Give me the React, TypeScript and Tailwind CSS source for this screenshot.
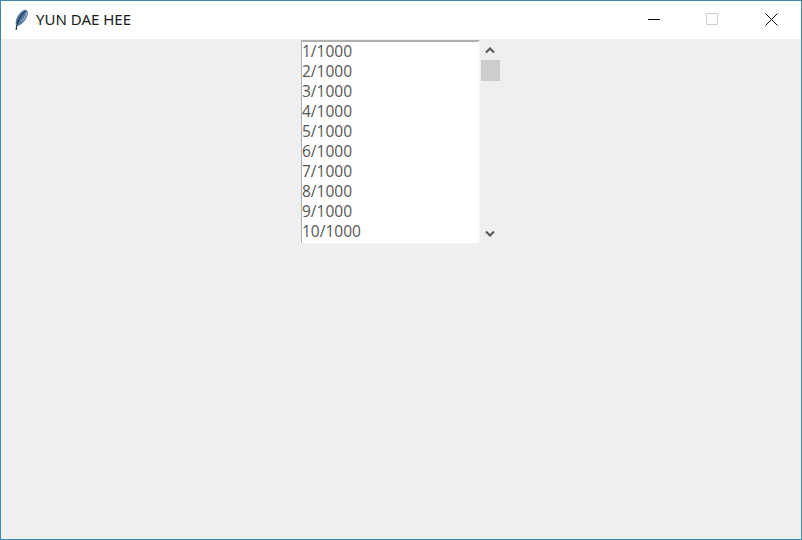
import React from 'react';

const rows = ['1/1000', '2/1000', '3/1000', '4/1000', '5/1000', '6/1000', '7/1000', '8/1000', '9/1000', '10/1000'];

const Feather = () => (
  <svg width="16" height="22" viewBox="0 0 16 22">
    <path d="M3 16.500 C1.500 11 5 4 11.500 0.800 C14 0.500 15.500 2.500 14.800 5.500 C13.500 10.500 9.500 15.500 4.500 17 Z" fill="#56789f" />
    <path d="M4.300 15.500 C5 11 8 6 12 2.500" stroke="#22395c" strokeWidth="1.300" fill="none" />
    <path d="M8.500 12.500 C11 10.500 13 7 13.800 3.500" stroke="#a3bdd8" strokeWidth="1.100" fill="none" />
    <path d="M3.800 16 L3.200 21" stroke="#3a3f46" strokeWidth="1.400" fill="none" />
  </svg>
);

const App: React.FC = () => {
  return (
    <div className="w-[802px] h-[540px] flex flex-col bg-[#efefef] border border-[#3a8db0] overflow-hidden font-['Open_Sans','Noto_Sans',sans-serif]">
      {/* title bar */}
      <div className="h-[38px] shrink-0 bg-white flex items-center">
        <div className="w-[35px] pl-[12px] flex items-center justify-start">
          <Feather />
        </div>
        <span className="text-[15px] leading-none -mt-[2px] text-[#1a1a1a] font-['Noto_Sans',sans-serif]">YUN DAE HEE</span>
        <div className="ml-auto flex items-center h-full -mt-[2px]">
          <div className="w-[58px] flex justify-center">
            <svg width="12" height="12" viewBox="0 0 12 12"><path d="M0 6.500H12" stroke="#111" strokeWidth="1" /></svg>
          </div>
          <div className="w-[58px] mr-[1px] flex justify-center">
            <svg width="12" height="12" viewBox="0 0 12 12"><rect x="0.500" y="0.500" width="11" height="11" fill="none" stroke="#cfcfcf" /></svg>
          </div>
          <div className="w-[59px] flex justify-center">
            <svg width="13" height="13" viewBox="0 0 13 13"><path d="M0.500 0.500L12.500 12.500M12.500 0.500L0.500 12.500" stroke="#111" strokeWidth="1" /></svg>
          </div>
        </div>
      </div>

      {/* listbox + scrollbar */}
      <div className="flex pl-[300px] pt-[1px]">
        <div className="w-[179px] h-[203px] bg-white border-l border-t-2 border-[#b0b0b0] border-r-2 border-r-[#f7f7f7] border-b-0 overflow-hidden">
          <div className="-mt-[1px]">
            {rows.map((r) => (
              <div key={r} className="h-[20px] leading-[20px] text-[15.500px] text-[#555555] whitespace-nowrap">{r}</div>
            ))}
          </div>
        </div>
        <div className="w-[20px] h-[203px] flex flex-col items-center">
          <div className="h-[20px] flex items-center justify-center">
            <svg width="10" height="7" viewBox="0 0 10 7"><path d="M1 5.500L5 1.500L9 5.500" fill="none" stroke="#555" strokeWidth="2" /></svg>
          </div>
          <div className="w-[19px] h-[21px] bg-[#cdcdcd]" />
          <div className="mt-auto h-[19px] flex items-center justify-center">
            <svg width="10" height="7" viewBox="0 0 10 7"><path d="M1 1.500L5 5.500L9 1.500" fill="none" stroke="#555" strokeWidth="2" /></svg>
          </div>
        </div>
      </div>
    </div>
  );
};

export default App;
